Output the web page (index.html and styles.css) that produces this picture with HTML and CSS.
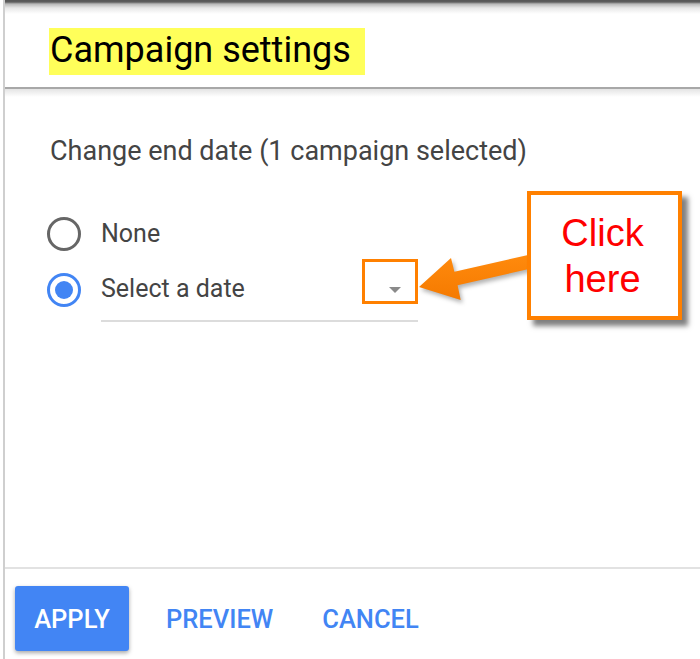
FILE: index.html
```html
<!DOCTYPE html>
<html>
<head>
<meta charset="utf-8">
<title>Campaign settings</title>
<link rel="stylesheet" href="styles.css">
</head>
<body>
<div class="frame">
  <div class="topbar"></div>
  <div class="header">
    <h1 class="title">Campaign settings</h1>
  </div>
  <div class="header-shadow"></div>
  <div class="content">
    <p class="label">Change end date (1 campaign selected)</p>
    <div class="radios">
      <div class="row row-none">
        <span class="radio"></span>
        <span class="opt">None</span>
      </div>
      <div class="row row-date">
        <span class="radio checked"><span class="dot"></span></span>
        <div class="field">
          <span class="opt">Select a date</span>
          <span class="drop"><span class="tri"></span></span>
        </div>
      </div>
    </div>
  </div>
  <div class="footer">
    <button class="btn primary">APPLY</button>
    <button class="btn flat preview">PREVIEW</button>
    <button class="btn flat cancel">CANCEL</button>
  </div>
</div>

<svg class="arrow" width="700" height="659" viewBox="0 0 700 659">
  <defs>
    <linearGradient id="ag" x1="0" y1="0" x2="0" y2="1">
      <stop offset="0" stop-color="#ff8a0d"/>
      <stop offset="1" stop-color="#f57a00"/>
    </linearGradient>
  </defs>
  <polygon points="419,287 451,258 454.4,271.7 527,255.2 530,268.8 457.6,285.3 460.7,300" fill="url(#ag)"/>
</svg>

<div class="callout">
  <span>Click</span>
  <span>here</span>
</div>
</body>
</html>
```

FILE: styles.css
```css
html, body {
  margin: 0;
  padding: 0;
}
body {
  width: 700px;
  height: 659px;
  overflow: hidden;
  position: relative;
  background: #fff;
  font-family: Roboto, "Liberation Sans", Arial, sans-serif;
}
.frame {
  height: 659px;
  margin-left: 3px;
  border-left: 2px solid #cfcfcf;
  display: flex;
  flex-direction: column;
}
.topbar {
  height: 14px;
  flex: none;
  background: linear-gradient(#565656 0, #5e5e5e 2px, #b8b8b8 4px, #e8e8e8 8px, #fff 14px);
}
.header {
  height: 75px;
  flex: none;
  box-sizing: border-box;
  padding: 14px 0 0 44px;
  border-bottom: 2px solid #a8a8a8;
}
.title {
  display: inline-block;
  margin: 0;
  background: #ffff5a;
  color: #000;
  font-size: 36px;
  font-weight: 400;
  line-height: 45px;
  padding: 0 14px 2px 1px;
}
.header-shadow {
  height: 8px;
  flex: none;
  background: linear-gradient(#e4e4e4, #fff);
}
.content {
  padding-left: 45px;
}
.label {
  margin: 39px 0 0 0;
  font-size: 27px;
  line-height: 30px;
  color: #444;
}
.radios {
  margin-left: -3px;
  margin-top: 44px;
}
.row {
  display: flex;
  align-items: center;
}
.row-none {
  height: 48px;
}
.row-date {
  height: 64px;
}
.radio {
  width: 34px;
  height: 34px;
  box-sizing: border-box;
  border: 3px solid #666;
  border-radius: 50%;
  flex: none;
  margin-right: 20px;
  display: flex;
  align-items: center;
  justify-content: center;
}
.radio.checked {
  border-color: #4285f4;
}
.dot {
  width: 18px;
  height: 18px;
  border-radius: 50%;
  background: #4285f4;
}
.opt {
  font-size: 25px;
  color: #444;
  line-height: 30px;
}
.field {
  width: 317px;
  height: 64px;
  box-sizing: border-box;
  border-bottom: 2px solid #dcdcdc;
  display: flex;
  align-items: center;
  justify-content: space-between;
}
.drop {
  align-self: flex-start;
  margin-top: 1px;
  width: 56px;
  height: 45px;
  box-sizing: border-box;
  border: 3px solid #ff8000;
  display: flex;
  justify-content: flex-end;
  align-items: flex-end;
  padding: 0 14px 8px 0;
}
.tri {
  width: 0;
  height: 0;
  border-left: 6px solid transparent;
  border-right: 6px solid transparent;
  border-top: 6px solid #8a8a8a;
}
.footer {
  margin-top: auto;
  height: 92px;
  box-sizing: border-box;
  border-top: 2px solid #e2e2e2;
  display: flex;
  align-items: flex-start;
  padding: 17px 0 0 10px;
}
.btn {
  font-family: Roboto, "Liberation Sans", Arial, sans-serif;
  font-size: 25.5px;
  font-weight: 500;
  height: 65px;
  border: none;
  background: none;
  padding: 0 20px;
  cursor: pointer;
}
.primary {
  background: #4285f4;
  color: #fff;
  border-radius: 3px;
  box-shadow: 0 2px 4px rgba(0, 0, 0, 0.35);
  width: 114px;
  padding: 0;
}
.flat {
  color: #4285f4;
}
.preview {
  margin-left: 17px;
}
.cancel {
  margin-left: 9px;
}
.arrow {
  position: absolute;
  left: 0;
  top: 0;
  pointer-events: none;
  filter: drop-shadow(2px 3px 2px rgba(0, 0, 0, 0.3));
}
.callout {
  position: absolute;
  left: 527px;
  top: 191px;
  width: 155px;
  height: 129px;
  box-sizing: border-box;
  border: 4px solid #ff8000;
  background: #fff;
  box-shadow: 6px 6px 5px rgba(0, 0, 0, 0.5);
  display: flex;
  flex-direction: column;
  align-items: center;
  justify-content: center;
  padding-right: 4px;
  font-family: "Liberation Sans", Arial, sans-serif;
  font-size: 38px;
  line-height: 46px;
  color: #ff0000;
}
```
